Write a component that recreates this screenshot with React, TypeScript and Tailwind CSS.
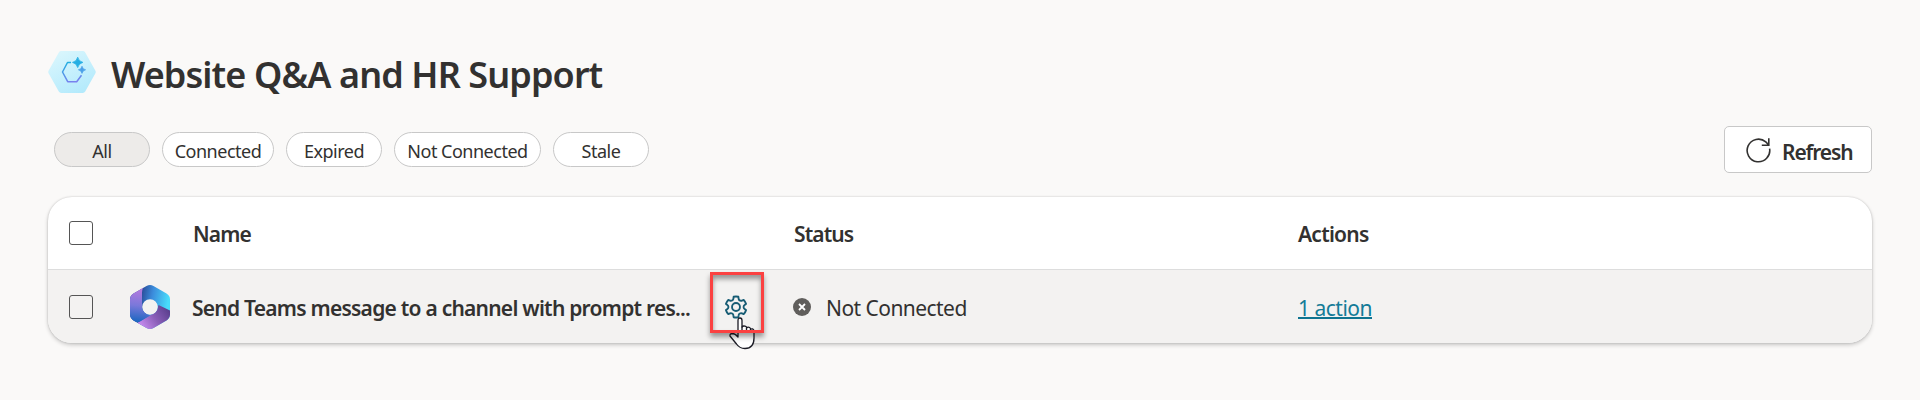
import React from "react";

const filters = [
  { label: "All", width: "w-24", active: true },
  { label: "Connected", width: "w-28", active: false },
  { label: "Expired", width: "w-24", active: false },
  { label: "Not Connected", width: "w-[147px]", active: false },
  { label: "Stale", width: "w-24", active: false },
];

function AgentIcon() {
  return (
    <svg width="48" height="42" viewBox="0 0 48 42" fill="none">
      <defs>
        <linearGradient id="agentBg" x1="12" y1="0" x2="34" y2="42" gradientUnits="userSpaceOnUse">
          <stop stopColor="#d9f6fd" />
          <stop offset="1" stopColor="#b3eafc" />
        </linearGradient>
        <linearGradient id="agentLine" x1="22" y1="11" x2="26" y2="31" gradientUnits="userSpaceOnUse">
          <stop stopColor="#22aee0" />
          <stop offset="1" stopColor="#7a80ee" />
        </linearGradient>
      </defs>
      <path d="M13.2 0h21.6q1.6 0 2.4 1.4l10.1 18q.9 1.6 0 3.2l-10.1 18q-.8 1.4-2.4 1.4H13.200q-1.600 0-2.400-1.400L.700 22.600q-.900-1.600 0-3.200l10.100-18Q11.600 0 13.200 0Z" fill="url(#agentBg)" />
      <path d="M23 11.500h-3.500L14.500 21l5.200 9.700h9L33.500 24.200" stroke="url(#agentLine)" strokeWidth="1.500" strokeLinejoin="round" />
      <path d="M29.700 6.200q.9 4.300 5.200 5.200q-4.300.9-5.200 5.200q-.9-4.300-5.200-5.200q4.300-.9 5.200-5.200Z" fill="#25aee3" stroke="#25aee3" strokeWidth=".8" strokeLinejoin="round" />
      <path d="M34 15.200q.6 3 3.600 3.600q-3 .6-3.600 3.600q-.6-3-3.600-3.600q3-.6 3.600-3.600Z" fill="#4ba0e8" stroke="#4ba0e8" strokeWidth=".7" strokeLinejoin="round" />
    </svg>
  );
}

function SuiteIcon() {
  return (
    <svg width="40" height="44" viewBox="0 0 40 44">
      <defs>
        <linearGradient id="suiteLeft" x1="9" y1="4" x2="6" y2="37" gradientUnits="userSpaceOnUse">
          <stop stopColor="#b57ade" />
          <stop offset=".5" stopColor="#7a78da" />
          <stop offset="1" stopColor="#1a66c0" />
        </linearGradient>
        <linearGradient id="suiteTop" x1="11" y1="12" x2="38" y2="17" gradientUnits="userSpaceOnUse">
          <stop stopColor="#2a4f9c" />
          <stop offset=".4" stopColor="#3b8cdc" />
          <stop offset="1" stopColor="#48dcfb" />
        </linearGradient>
        <linearGradient id="suiteBottom" x1="37" y1="24" x2="12" y2="41" gradientUnits="userSpaceOnUse">
          <stop stopColor="#5d4190" />
          <stop offset=".5" stopColor="#8a5eb8" />
          <stop offset="1" stopColor="#c389ec" />
        </linearGradient>
        <clipPath id="suiteShape">
          <path d="M16.500 1q3.500-2 7 0l13 7.600Q40 10.700 40 14.500v15q0 3.800-3.500 5.900L23.500 43q-3.500 2-7 0l-13-7.600Q0 33.300 0 29.500v-15q0-3.800 3.500-5.900Z M27.800 22a7.800 7.800 0 1 0-15.600 0a7.800 7.800 0 1 0 15.600 0Z" clipRule="evenodd" />
        </clipPath>
      </defs>
      <g clipPath="url(#suiteShape)">
        <path d="M0 0h40v44H0Z" fill="url(#suiteTop)" />
        <path d="M40 25.500L28.500 20L27 25L20 30.500L8 37.500v6.500h32Z" fill="url(#suiteBottom)" />
        <path d="M0 0h16q-4 2.500-4 7.500V22q0 5 8 8.500L10 36.500Q7 38 0 36Z" fill="url(#suiteLeft)" />
      </g>
    </svg>
  );
}

function GearIcon() {
  return (
    <svg width="28" height="28" viewBox="0 0 24 24" fill="none" stroke="#175c74" strokeWidth="1.600">
      <path d="M12 3c.7 0 1.400.08 2.030.22l.2 1.550c.12 1.080 1.020 1.890 2.090 1.890.29 0 .57-.06.84-.180l1.420-.62c.98 1.050 1.640 2.250 2.030 3.480l-1.240.92a2.160 2.160 0 0 0 0 3.480l1.240.92c-.4 1.260-1.080 2.460-2.030 3.480l-1.420-.62a2.090 2.090 0 0 0-2.930 1.710l-.2 1.550c-1.330.3-2.730.3-4.060 0l-.2-1.550a2.090 2.090 0 0 0-2.930-1.710l-1.420.62a9.200 9.200 0 0 1-2.030-3.480l1.240-.92a2.160 2.160 0 0 0 0-3.480l-1.240-.92c.4-1.260 1.080-2.460 2.030-3.480l1.420.62a2.090 2.090 0 0 0 2.930-1.710l.2-1.550C10.600 3.080 11.300 3 12 3Z" strokeLinejoin="round" />
      <circle cx="12" cy="12" r="3.400" />
    </svg>
  );
}

function HandCursor() {
  return (
    <svg width="26" height="33" viewBox="0 0 26 33" fill="white" stroke="#1b1b25" strokeWidth="1.300" strokeLinejoin="round" strokeLinecap="round">
      <path d="M9 18V3.500Q9 1 11 1T13 3.500V10Q14 8.600 16 9.200T17.500 11Q19 9.500 20.500 10.500T21.500 12.300Q23.800 11 25 13.500V21Q25 31.500 16 31.500Q10.500 31.500 7.500 27L1 19Q.500 16.600 3.500 16.500Q6 16.500 9 20Z" />
      <path d="M13 10v3M17.500 11v2.500M21.500 12.300V14.500" fill="none" />
    </svg>
  );
}

function Checkbox() {
  return <span role="checkbox" aria-checked="false" className="block size-6 rounded-[3px] border border-[#555555]" />;
}

export default function App() {
  return (
    <main className="h-[400px] w-[1920px] overflow-hidden bg-[#faf9f8] px-12 pt-[51px] font-['Noto_Sans','Open_Sans',sans-serif] text-[#323130]">
      <header className="flex h-[42px] items-center">
        <AgentIcon />
        <h1 className="ml-[15px] pt-[5px] text-[36px] leading-[42px] font-semibold tracking-[-0.9px] whitespace-nowrap">
          <span>Website Q&amp;A and HR Support</span>
        </h1>
      </header>

      <div className="mt-[33px] flex h-[47px] items-center justify-between">
        <nav className="flex gap-3 pl-1.5">
          {filters.map((f) => (
            <button
              key={f.label}
              className={`h-[35px] shrink-0 rounded-full border border-[#c8c8c8] pt-0.5 text-lg leading-none tracking-[-0.5px] whitespace-nowrap ${f.width} ${f.active ? "bg-[#edebe9]" : "bg-white"}`}
            >
              <span>{f.label}</span>
            </button>
          ))}
        </nav>
        <button className="flex h-[47px] w-[148px] items-center rounded-[5px] border border-[#c8c8c8] bg-white pl-[21px]">
          <svg width="25" height="26" viewBox="0 0 25 26" fill="none" stroke="#323130" strokeWidth="1.600">
            <path d="M23.600 11.600A11.300 11.300 0 1 1 19.800 4.900L22.800 8M22.800 1.200V8.200H15.800" />
          </svg>
          <span className="ml-[11px] pt-1.5 text-[21px] leading-none font-semibold tracking-[-1.1px]">Refresh</span>
        </button>
      </div>

      <section className="mt-6 h-[146px] rounded-3xl bg-white shadow-[0_0_2px_rgba(0,0,0,0.18),0_2px_4px_rgba(0,0,0,0.2)]">
        <div className="flex h-[73px] items-center border-b border-[#dddddd] text-[21px] font-semibold">
          <div className="w-[145px] pl-[21px]"><Checkbox /></div>
          <div className="w-[601px] pt-1 tracking-[-0.9px]"><span>Name</span></div>
          <div className="w-[504px] pt-1 tracking-[-0.9px]"><span>Status</span></div>
          <div className="pt-1 tracking-[-0.75px]"><span>Actions</span></div>
        </div>
        <div className="flex h-[73px] items-center rounded-b-3xl bg-[#f3f2f1] text-[21px]">
          <div className="w-[82px] pl-[21px]"><Checkbox /></div>
          <SuiteIcon />
          <div className="ml-[22px] w-[518px] pt-1 font-semibold tracking-[-0.76px] whitespace-nowrap">
            <span>Send Teams message to a channel with prompt res...</span>
          </div>
          <div className="relative flex h-[61px] w-[54px] items-center justify-center pr-0.5">
            <GearIcon />
            <div className="absolute top-[41px] left-[19px]"><HandCursor /></div>
            <div className="absolute inset-x-0 -top-1 h-[61px] border-3 border-[#fb4141] shadow-[0_4px_5px_rgba(0,0,0,0.38),inset_0_4px_5px_rgba(0,0,0,0.38)]" />
          </div>
          <svg className="ml-[29px]" width="18" height="18" viewBox="0 0 18 18">
            <circle cx="9" cy="9" r="9" fill="#605e5c" />
            <path d="M6 6l6 6M12 6l-6 6" stroke="white" strokeWidth="1.800" />
          </svg>
          <div className="ml-[15px] w-[472px] pt-1 tracking-[-0.55px]"><span>Not Connected</span></div>
          <a className="mt-1.5 border-b-2 border-[#0f7490] leading-[17px] tracking-[-0.5px] text-[#147c98]" href="#actions">1 action</a>
        </div>
      </section>
    </main>
  );
}
